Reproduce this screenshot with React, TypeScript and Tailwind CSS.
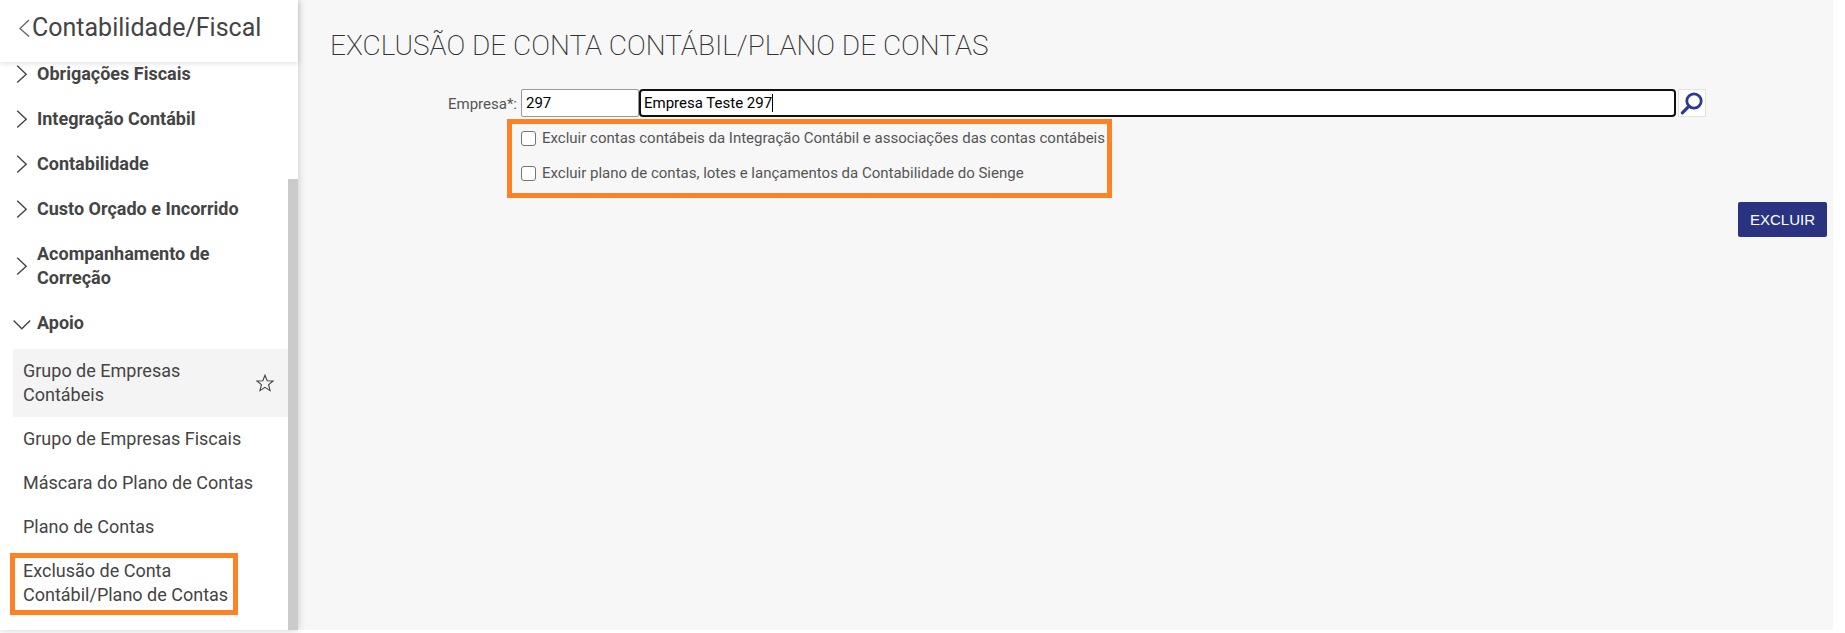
import { useState } from "react";

const groups = [
  "Obrigações Fiscais",
  "Integração Contábil",
  "Contabilidade",
  "Custo Orçado e Incorrido",
  "Acompanhamento de Correção",
];

const links = [
  { label: "Grupo de Empresas Contábeis", hovered: true },
  { label: "Grupo de Empresas Fiscais" },
  { label: "Máscara do Plano de Contas" },
  { label: "Plano de Contas" },
  { label: "Exclusão de Conta Contábil/Plano de Contas", marked: true },
];

function ChevronRight() {
  return (
    <svg className="h-[18px] w-[18px] shrink-0" viewBox="0 0 18 18" fill="none" stroke="#444" strokeWidth="1.4" aria-hidden="true">
      <path d="M4.2 .8 13.2 9.2 4.2 17.4" />
    </svg>
  );
}

function ChevronDown() {
  return (
    <svg className="mt-1 h-[18px] w-[18px] shrink-0" viewBox="0 0 18 18" fill="none" stroke="#444" strokeWidth="1.4" aria-hidden="true">
      <path d="M.6 4.4 8.8 12.8 17.2 4.4" />
    </svg>
  );
}

function Sidebar() {
  return (
    <aside className="z-10 flex w-[298px] shrink-0 flex-col bg-white shadow-[0_0_8px_rgba(0,0,0,0.2)]">
      <header className="z-10 flex h-[62px] shrink-0 items-center bg-white pb-1.5 pl-[18px] shadow-[0_1px_6px_rgba(0,0,0,0.14)]">
        <button type="button" className="flex items-center gap-0.5 text-[25px] leading-8" aria-label="Voltar para Contabilidade/Fiscal">
          <svg className="h-[18px] w-3 shrink-0" viewBox="0 0 12 18" fill="none" stroke="#666" strokeWidth="1.3" aria-hidden="true">
            <path d="M11 1 2 9.4 11 17.6" />
          </svg>
          Contabilidade/Fiscal
        </button>
      </header>
      <div className="flex grow">
        <nav className="flex min-w-0 flex-1 flex-col pl-[13px] text-lg leading-6">
          <div className="flex flex-col gap-[21px] pb-3.5">
            {groups.map((name) => (
              <button key={name} type="button" className="flex items-center gap-1.5 pr-12 text-left font-bold">
                <ChevronRight />
                {name}
              </button>
            ))}
            <button type="button" className="flex items-center gap-1.5 text-left font-bold" aria-expanded="true">
              <ChevronDown />
              Apoio
            </button>
          </div>
          <ul>
            {links.map(({ label, hovered, marked }) => (
              <li key={label} className={`relative flex items-center justify-between py-2.5 pl-2.5 pr-3.5 ${hovered ? "bg-[#f4f4f4]" : ""}`}>
                <a href="#" className={hovered ? "max-w-48" : "max-w-60"}>
                  {label}
                </a>
                {hovered && (
                  <button type="button" aria-label="Favoritar">
                    <svg className="h-[18px] w-[18px]" viewBox="0 0 18 18" fill="none" stroke="#444" strokeWidth="1.1" aria-hidden="true">
                      <path d="M9 1.2 11.2 6.7 17 7 12.6 10.7 14 16.6 9 13.4 4 16.6 5.4 10.7 1 7 6.8 6.7Z" />
                    </svg>
                  </button>
                )}
                {marked && <span className="pointer-events-none absolute -left-[3px] top-1 h-[62px] w-[228px] border-5 border-[#ff8126]" />}
              </li>
            ))}
          </ul>
        </nav>
        <div className="flex w-2.5 shrink-0 flex-col pt-[117px]">
          <div className="grow bg-[#cbcbcb]" />
        </div>
      </div>
    </aside>
  );
}

export default function App() {
  const [code, setCode] = useState("297");
  const [company, setCompany] = useState("Empresa Teste 297");
  return (
    <div className="flex h-screen bg-white pb-[3px] pr-3 font-[Roboto,sans-serif] text-[#444]">
      <Sidebar />
      <main className="flex grow flex-col bg-[#f7f7f7] pl-8 pt-[26px]">
        <h1 className="text-[28px] font-extralight leading-10 text-[#333]">EXCLUSÃO DE CONTA CONTÁBIL/PLANO DE CONTAS</h1>
        <form className="mt-[23px] flex flex-col text-[15px] leading-5">
          <div className="flex pr-[127px]">
            <label htmlFor="code" className="w-[191px] shrink-0 pr-1 pt-[5px] text-right text-[#555]">
              Empresa*:
            </label>
            <input
              id="code"
              value={code}
              onChange={(e) => setCode(e.target.value)}
              className="h-7 w-[118px] shrink-0 rounded-xs border border-[#999] bg-white px-1 text-black outline-none"
            />
            <div className="relative flex grow">
              <input
                aria-label="Nome da empresa"
                value={company}
                onChange={(e) => setCompany(e.target.value)}
                className="h-7 grow rounded-sm border-2 border-[#101010] bg-white px-[3px] text-black caret-transparent outline-none"
              />
              <span className="pointer-events-none absolute left-[5px] top-[5px] flex text-transparent" aria-hidden="true">
                <span className="h-[18px] border-r border-black">{company}</span>
              </span>
            </div>
            <button type="button" aria-label="Pesquisar" className="ml-0.5 flex h-7 w-7 shrink-0 items-center justify-center border border-[#e2e2e2] bg-white">
              <svg className="h-6 w-6" viewBox="0 0 24 24" fill="none" stroke="#2b3990" aria-hidden="true">
                <circle cx="14" cy="10" r="7.2" strokeWidth="2.8" />
                <path d="M9 15.2 2.4 21.8" strokeWidth="3.2" strokeLinecap="round" />
              </svg>
            </button>
          </div>
          <div className="ml-[177px] mt-0.5 flex h-[79px] w-fit flex-col gap-[15px] border-5 border-[#ff8126] pl-[9px] pr-0.5 pt-1 text-[#555]">
            <label className="flex items-center gap-1.5">
              <input type="checkbox" className="h-[15px] w-[15px] appearance-none rounded-[3px] border border-[#767676] bg-white checked:bg-[#2a3382]" />
              Excluir contas contábeis da Integração Contábil e associações das contas contábeis
            </label>
            <label className="flex items-center gap-1.5">
              <input type="checkbox" className="h-[15px] w-[15px] appearance-none rounded-[3px] border border-[#767676] bg-white checked:bg-[#2a3382]" />
              Excluir plano de contas, lotes e lançamentos da Contabilidade do Sienge
            </label>
          </div>
          <button type="button" className="mr-1.5 mt-1 h-[35px] self-end rounded-xs bg-[#2a3382] px-3 font-['Liberation_Sans',sans-serif] text-[15px] text-white">
            EXCLUIR
          </button>
        </form>
      </main>
    </div>
  );
}
